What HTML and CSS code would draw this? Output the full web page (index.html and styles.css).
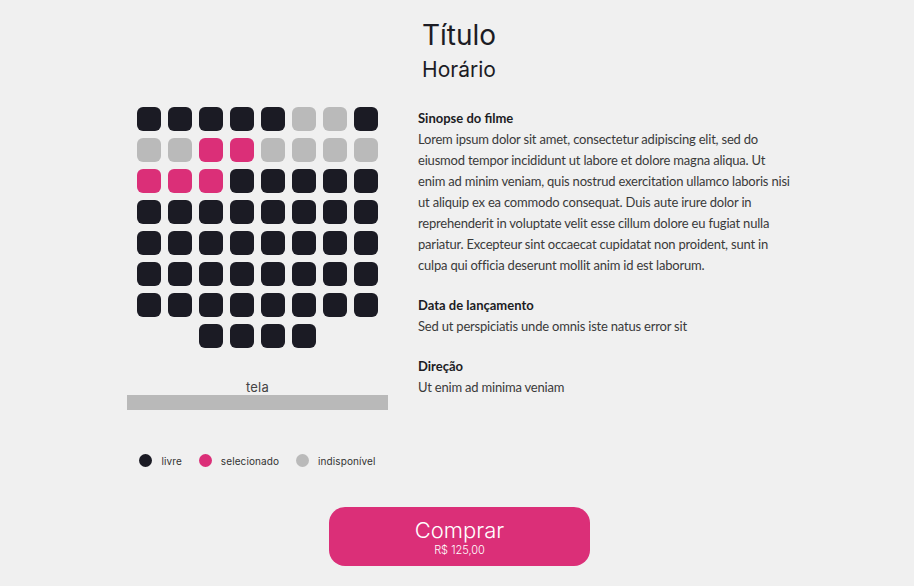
FILE: index.html
```html
<!DOCTYPE html>
<html lang="pt-BR">
<head>
<meta charset="utf-8">
<title>Título</title>
<link rel="stylesheet" href="styles.css">
</head>
<body>
<header class="header">
  <h1 class="title">Título</h1>
  <h2 class="subtitle">Horário</h2>
</header>
<main class="main">
  <section class="room">
    <div class="seats">
      <span class="seat free"></span><span class="seat free"></span><span class="seat free"></span><span class="seat free"></span><span class="seat free"></span><span class="seat off"></span><span class="seat off"></span><span class="seat free"></span>
      <span class="seat off"></span><span class="seat off"></span><span class="seat sel"></span><span class="seat sel"></span><span class="seat off"></span><span class="seat off"></span><span class="seat off"></span><span class="seat off"></span>
      <span class="seat sel"></span><span class="seat sel"></span><span class="seat sel"></span><span class="seat free"></span><span class="seat free"></span><span class="seat free"></span><span class="seat free"></span><span class="seat free"></span>
      <span class="seat free"></span><span class="seat free"></span><span class="seat free"></span><span class="seat free"></span><span class="seat free"></span><span class="seat free"></span><span class="seat free"></span><span class="seat free"></span>
      <span class="seat free"></span><span class="seat free"></span><span class="seat free"></span><span class="seat free"></span><span class="seat free"></span><span class="seat free"></span><span class="seat free"></span><span class="seat free"></span>
      <span class="seat free"></span><span class="seat free"></span><span class="seat free"></span><span class="seat free"></span><span class="seat free"></span><span class="seat free"></span><span class="seat free"></span><span class="seat free"></span>
      <span class="seat free"></span><span class="seat free"></span><span class="seat free"></span><span class="seat free"></span><span class="seat free"></span><span class="seat free"></span><span class="seat free"></span><span class="seat free"></span>
      <span class="seat free first-back"></span><span class="seat free"></span><span class="seat free"></span><span class="seat free"></span>
    </div>
    <div class="screen">
      <span class="screen-label">tela</span>
      <div class="screen-bar"></div>
    </div>
    <ul class="legend">
      <li class="legend-item"><span class="dot free"></span>livre</li>
      <li class="legend-item"><span class="dot sel"></span>selecionado</li>
      <li class="legend-item"><span class="dot off"></span>indisponível</li>
    </ul>
  </section>
  <section class="info">
    <div class="block">
      <h3 class="block-title">Sinopse do filme</h3>
      <p class="block-text">Lorem ipsum dolor sit amet, consectetur adipiscing elit, sed do eiusmod tempor incididunt ut labore et dolore magna aliqua. Ut enim ad minim veniam, quis nostrud exercitation ullamco laboris nisi ut aliquip ex ea commodo consequat. Duis aute irure dolor in reprehenderit in voluptate velit esse cillum dolore eu fugiat nulla pariatur. Excepteur sint occaecat cupidatat non proident, sunt in culpa qui officia deserunt mollit anim id est laborum.</p>
    </div>
    <div class="block">
      <h3 class="block-title">Data de lançamento</h3>
      <p class="block-text">Sed ut perspiciatis unde omnis iste natus error sit</p>
    </div>
    <div class="block">
      <h3 class="block-title">Direção</h3>
      <p class="block-text">Ut enim ad minima veniam</p>
    </div>
  </section>
</main>
<footer class="footer">
  <button class="buy">
    <span class="buy-label">Comprar</span>
    <span class="buy-price">R$ 125,00</span>
  </button>
</footer>
</body>
</html>
```
FILE: styles.css
```css
* { box-sizing: border-box; }
html, body { margin: 0; padding: 0; }
body {
  background: #f0f0f0;
  width: 914px;
  height: 586px;
  overflow: hidden;
  font-family: Inter, "Noto Sans", sans-serif;
  color: #1c1c24;
}
.header {
  text-align: center;
  padding-top: 17px;
  padding-left: 4px;
}
.title {
  margin: 0;
  font-weight: 400;
  font-size: 28px;
  line-height: 36px;
  color: #1c1c24;
}
.subtitle {
  margin: 3px 0 0;
  font-weight: 400;
  font-size: 21px;
  line-height: 28px;
  color: #1c1c24;
}
.main {
  display: flex;
  padding-left: 127px;
  margin-top: 23px;
  gap: 30px;
}
.room {
  width: 261px;
  display: flex;
  flex-direction: column;
  align-items: center;
}
.seats {
  display: grid;
  grid-template-columns: repeat(8, 24px);
  grid-auto-rows: 24px;
  gap: 7px;
}
.seat {
  display: block;
  border-radius: 6px;
}
.seat.free { background: #1b1b24; }
.seat.sel { background: #db2f78; }
.seat.off { background: #bababa; }
.first-back { grid-column-start: 3; }
.screen {
  width: 261px;
  margin-top: 31px;
  display: flex;
  flex-direction: column;
  align-items: center;
}
.screen-label {
  font-size: 13px;
  line-height: 16px;
  color: #444;
  letter-spacing: 0.2px;
}
.screen-bar {
  width: 261px;
  height: 15px;
  background: #b9b9b9;
}
.legend {
  list-style: none;
  margin: 44px 0 0;
  padding: 0;
  display: flex;
  gap: 17px;
}
.legend-item {
  display: flex;
  align-items: center;
  gap: 9px;
  font-size: 10px;
  letter-spacing: 0.1px;
  color: #333;
}
.dot {
  width: 13px;
  height: 13px;
  border-radius: 50%;
  display: block;
}
.dot.free { background: #1b1b24; }
.dot.sel { background: #db2f78; }
.dot.off { background: #bababa; }
.info {
  width: 377px;
  font-family: Lato, "Noto Sans", sans-serif;
  margin-top: 1px;
}
.block { margin-bottom: 19px; }
.block-title {
  margin: 0;
  font-size: 13px;
  line-height: 21px;
  font-weight: 700;
  color: #1c1c24;
}
.block-text {
  margin: 0;
  font-size: 13px;
  line-height: 21px;
  letter-spacing: -0.2px;
  color: #3a3a3a;
}
.footer {
  display: flex;
  justify-content: center;
  padding-left: 5px;
  margin-top: 40px;
}
.buy {
  width: 261px;
  height: 59px;
  border: none;
  border-radius: 16px;
  background: #db2f78;
  color: #fff;
  display: flex;
  flex-direction: column;
  align-items: center;
  justify-content: center;
  font-family: Inter, "Noto Sans", sans-serif;
  padding: 0;
}
.buy-label {
  font-size: 22px;
  line-height: 26px;
  font-weight: 300;
}
.buy-price {
  font-size: 11px;
  line-height: 14px;
  font-weight: 300;
}
```
